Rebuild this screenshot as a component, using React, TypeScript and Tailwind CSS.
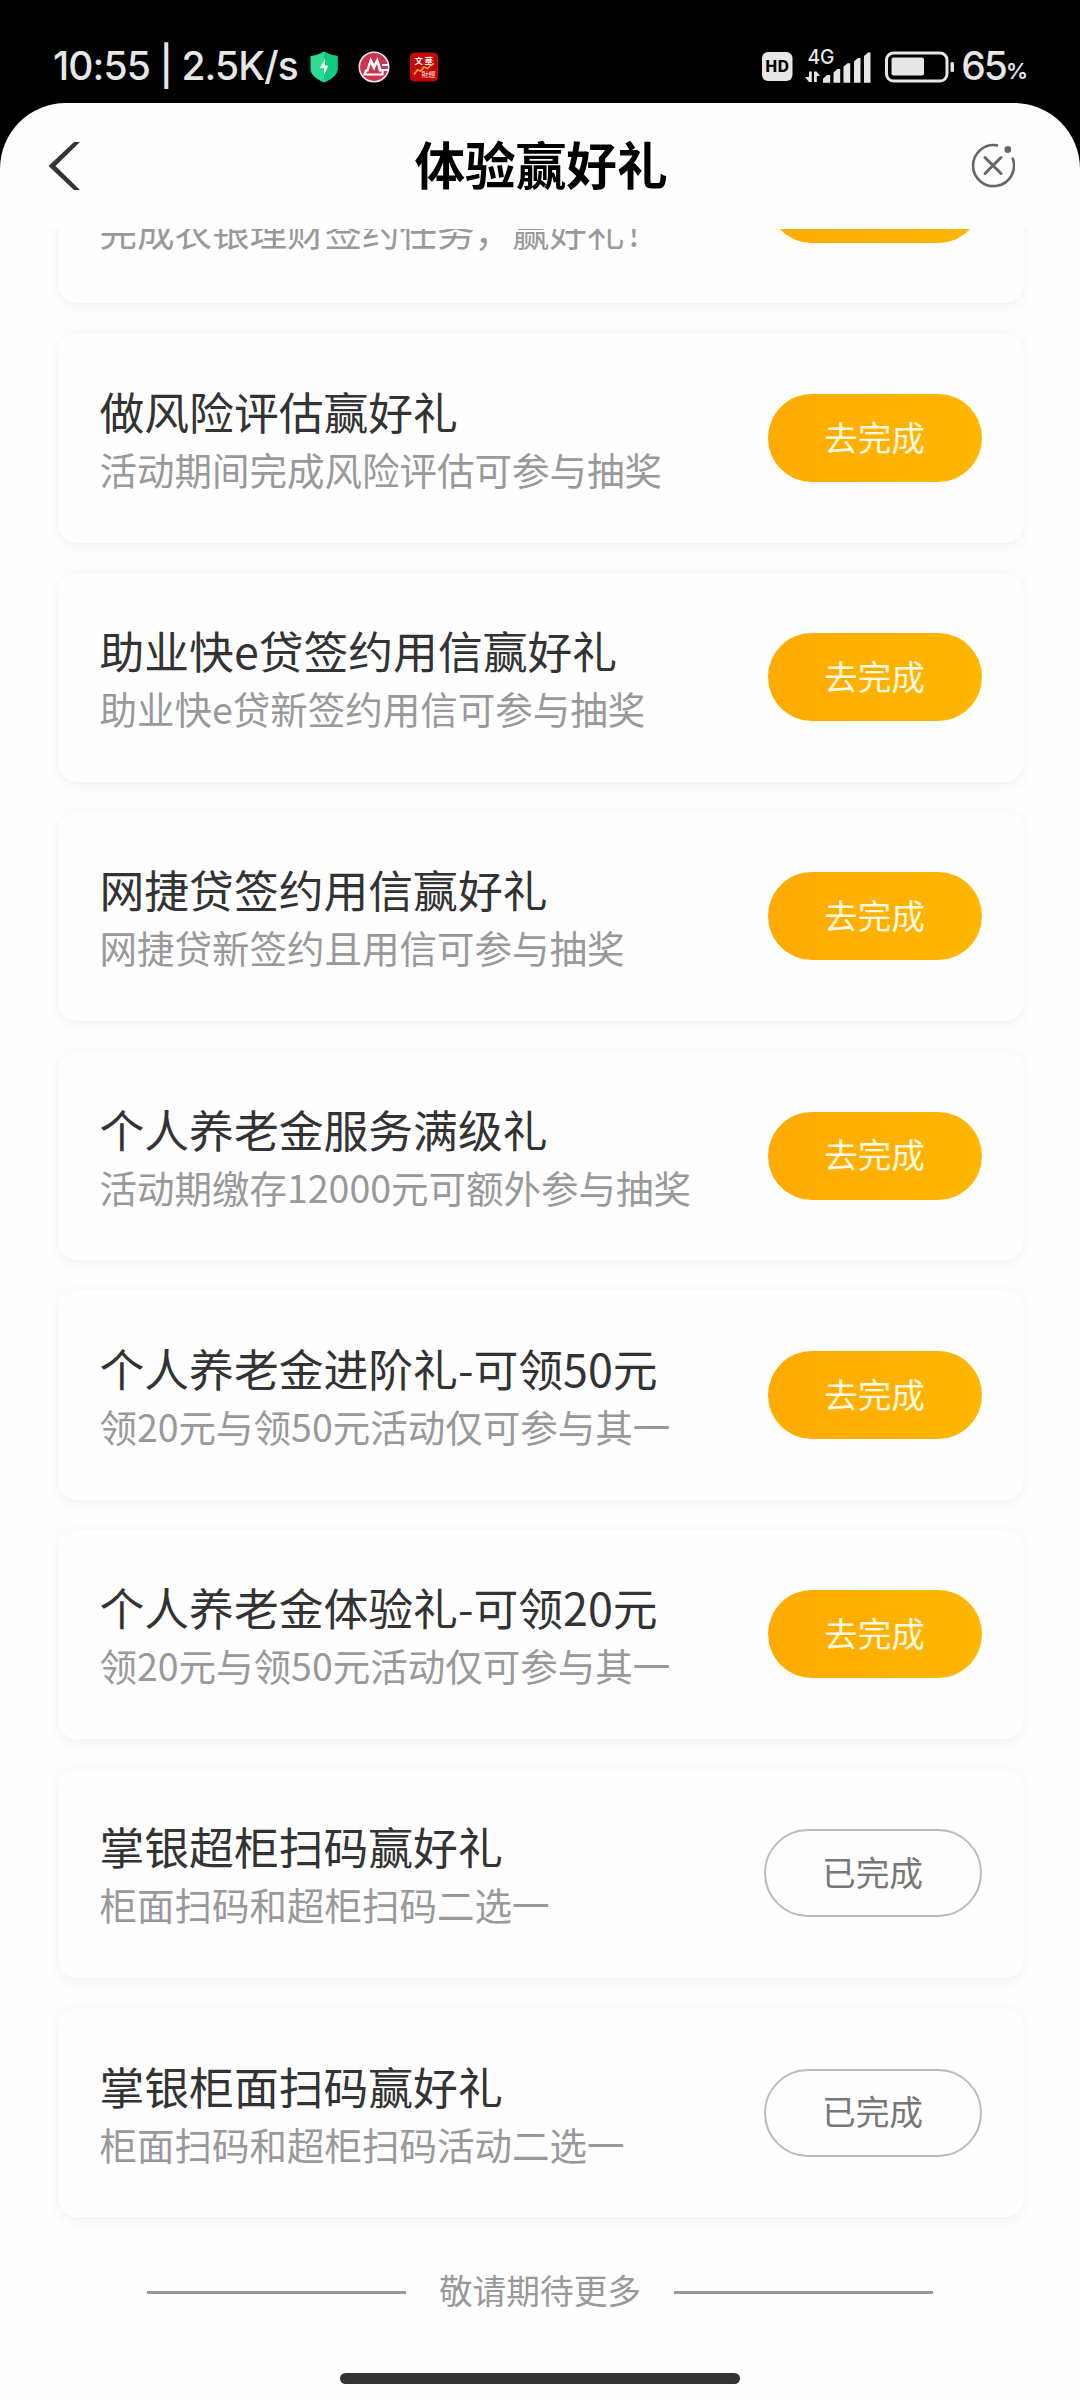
type Task = {
  title?: string;
  desc: string;
  done?: boolean;
};

const tasks: Task[] = [
  { desc: "完成农银理财签约任务，赢好礼！" },
  { title: "做风险评估赢好礼", desc: "活动期间完成风险评估可参与抽奖" },
  { title: "助业快e贷签约用信赢好礼", desc: "助业快e贷新签约用信可参与抽奖" },
  { title: "网捷贷签约用信赢好礼", desc: "网捷贷新签约且用信可参与抽奖" },
  { title: "个人养老金服务满级礼", desc: "活动期缴存12000元可额外参与抽奖" },
  { title: "个人养老金进阶礼-可领50元", desc: "领20元与领50元活动仅可参与其一" },
  { title: "个人养老金体验礼-可领20元", desc: "领20元与领50元活动仅可参与其一" },
  { title: "掌银超柜扫码赢好礼", desc: "柜面扫码和超柜扫码二选一", done: true },
  { title: "掌银柜面扫码赢好礼", desc: "柜面扫码和超柜扫码活动二选一", done: true },
];

function ShieldIcon() {
  return (
    <svg width="28" height="32" viewBox="0 0 28 32">
      <path d="M14 .5C18 3 23 4.500 27.500 5v13c0 6-6 10-13.500 13.500C6.500 28 .5 24 .5 18V5C5 4.500 10 3 14 .5z" fill="#2edb93" />
      <path d="M14 .5C18 3 23 4.500 27.500 5v13c0 6-6 10-13.500 13.500z" fill="#0fcb7c" />
      <path d="M15 7.500L10 17h4v7l4.500-9.500H15z" fill="#f4fffa" />
    </svg>
  );
}

function BankIcon() {
  return (
    <svg width="32" height="32" viewBox="0 0 32 32">
      <circle cx="16" cy="16" r="14.700" fill="#c9364f" stroke="#f6e6e8" strokeWidth="1.600" />
      <path d="M8 20.500L12.500 6l3.500 7 3.500-7 4.500 14.500h-3L19 13l-3 6.500-3.500-6.500-2 7.500z" fill="#fff" />
      <path d="M8.500 18.500L6.500 23.500h18v-4.500H31M31 14h-7" fill="none" stroke="#fff" strokeWidth="2.200" />
    </svg>
  );
}

function FinanceIcon() {
  return (
    <svg width="28" height="30" viewBox="0 0 28 30">
      <rect width="28" height="29" y=".5" rx="4.500" fill="#c4060b" />
      <text x="4.500" y="12" fontSize="8.500" fontWeight="700" fill="#fff" textLength="18.500">文華</text>
      <text x="11.500" y="25" fontSize="7" fill="#ffe3dc">財經</text>
      <path d="M4 22.500l3.500-4.500 3 1 3.500-4 3.500 1.500 3-3 3.500-2" fill="none" stroke="#f5a81c" strokeWidth="1.600" />
    </svg>
  );
}

function SystemIcons() {
  return (
    <svg width="196" height="40" viewBox="0 0 196 40" fill="#e6e6e6">
      <rect x="1" y="5" width="30.500" height="29" rx="6" />
      <text x="4.500" y="25" fontSize="15.500" fontWeight="800" textLength="23.500" fill="#000">HD</text>
      <text x="46.500" y="17" fontSize="20.500" fontWeight="500" textLength="27" lengthAdjust="spacingAndGlyphs">4G</text>
      {/* up / down data arrows */}
      <path d="M48 24.500h2.800V35H48l-4-5h4zM53 35h2.800v-6H59l-3.500-4.500H53z" />
      <path d="M62 35.800v-4l4-3.800h3.200v7.800zM72.500 35.800V25.500l4-3.500h2.700v13.800zM82.500 35.800v-16l4-3.500h2.700v19.500zM93 35.800V14.500l4-3.500h2.500v24.800zM103 35.800V9l4-3.500h2.500v30.300z" />
      <rect x="125.500" y="6" width="60.500" height="28" rx="7" fill="none" stroke="#e6e6e6" strokeWidth="3" />
      <rect x="130.500" y="10.500" width="32.500" height="18" rx="2" />
      <rect x="189.500" y="15" width="3.500" height="10" rx="1.500" />
    </svg>
  );
}

function CloseIcon() {
  return (
    <svg width="44" height="46" viewBox="0 0 44 46" fill="none" stroke="#666" strokeLinecap="round" className="mb-[2px]">
      <path d="M26 3.400A20.500 20.500 0 1 0 41.800 16.500" strokeWidth="2.600" />
      <path d="M14 15.500l16 16M30 15.500l-16 16" strokeWidth="3" />
      <circle cx="36.800" cy="7.500" r="3.400" fill="#666" stroke="none" />
    </svg>
  );
}

function StatusBar() {
  return (
    <div className="h-[103px] pt-[30px] pl-[53px] pr-[52px] flex justify-between text-[#e6e6e6] font-['Inter','Noto_Sans_CJK_SC',sans-serif]">
      <div className="flex items-center h-[73px]">
        <span className="text-[39px] font-medium tracking-[-0.9px] whitespace-pre w-[248px]">
          10:55 | 2.5K/s
        </span>
        <div className="flex items-center gap-[20px] ml-[9px]">
          <ShieldIcon />
          <BankIcon />
          <FinanceIcon />
        </div>
      </div>
      <div className="flex items-center h-[73px]">
        <SystemIcons />
        <span className="text-[39px] font-medium tracking-[-2px] ml-[4px]">65</span>
        <span className="text-[22px] font-semibold mt-[9px]">%</span>
      </div>
    </div>
  );
}

function TaskCard({ title, desc, done }: Task) {
  return (
    <div className="h-[209.25px] shrink-0 rounded-[20px] bg-[#fefefe] shadow-[0_3px_14px_rgba(0,0,0,0.06)] px-[42px] flex items-center justify-between">
      <div className="whitespace-nowrap pt-[2px]">
        <p className="text-[44.8px] leading-[60px] min-h-[60px] text-[#333]">{title}</p>
        <p className="text-[37.5px] leading-[56px] text-[#999]">{desc}</p>
      </div>
      {done ? (
        <button className="w-[218px] h-[88px] pb-[2px] rounded-full border-2 border-[#bbb] text-[33.7px] text-[#777]">
          已完成
        </button>
      ) : (
        <button className="w-[214px] h-[88px] pb-[2px] rounded-full bg-linear-to-r from-[#ffaa00] to-[#ffb700] text-[33.7px] text-[#fff8e0]">
          去完成
        </button>
      )}
    </div>
  );
}

export default function App() {
  return (
    <div className="w-[1080px] h-[2400px] bg-black overflow-hidden font-['Noto_Sans_CJK_SC',sans-serif]">
      <StatusBar />
      <div className="h-[2297px] bg-[#fefefe] rounded-t-[66px] flex flex-col">
        <header className="h-[126px] shrink-0 pl-[48px] pr-[65px] flex items-center justify-between">
          <svg width="32" height="50" viewBox="0 0 32 50">
            <path d="M32 1h-6L.5 25 26 49h6L7.500 25z" fill="#333" />
          </svg>
          <h1 className="text-[50.6px] leading-[70px] font-bold pb-[6px] pl-[31px]">体验赢好礼</h1>
          <CloseIcon />
        </header>
        <main className="h-[2010px] shrink-0 overflow-hidden pl-[57.5px] pr-[56.500px] pb-[21.7px] flex flex-col justify-end gap-[30px]">
          {tasks.map((task, i) => (
            <TaskCard key={i} {...task} />
          ))}
        </main>
        <footer className="h-[134px] shrink-0 flex items-start justify-center gap-[33px] text-[33.7px] leading-[50px] text-[#999] pt-[26px]">
          <span className="w-[259px] h-[3px] mt-[26px] bg-[#999]" />
          <span>敬请期待更多</span>
          <span className="w-[259px] h-[3px] mt-[26px] bg-[#999]" />
        </footer>
        <div className="w-[400px] h-[10.500px] shrink-0 mx-auto rounded-full bg-[#333]" />
      </div>
    </div>
  );
}
